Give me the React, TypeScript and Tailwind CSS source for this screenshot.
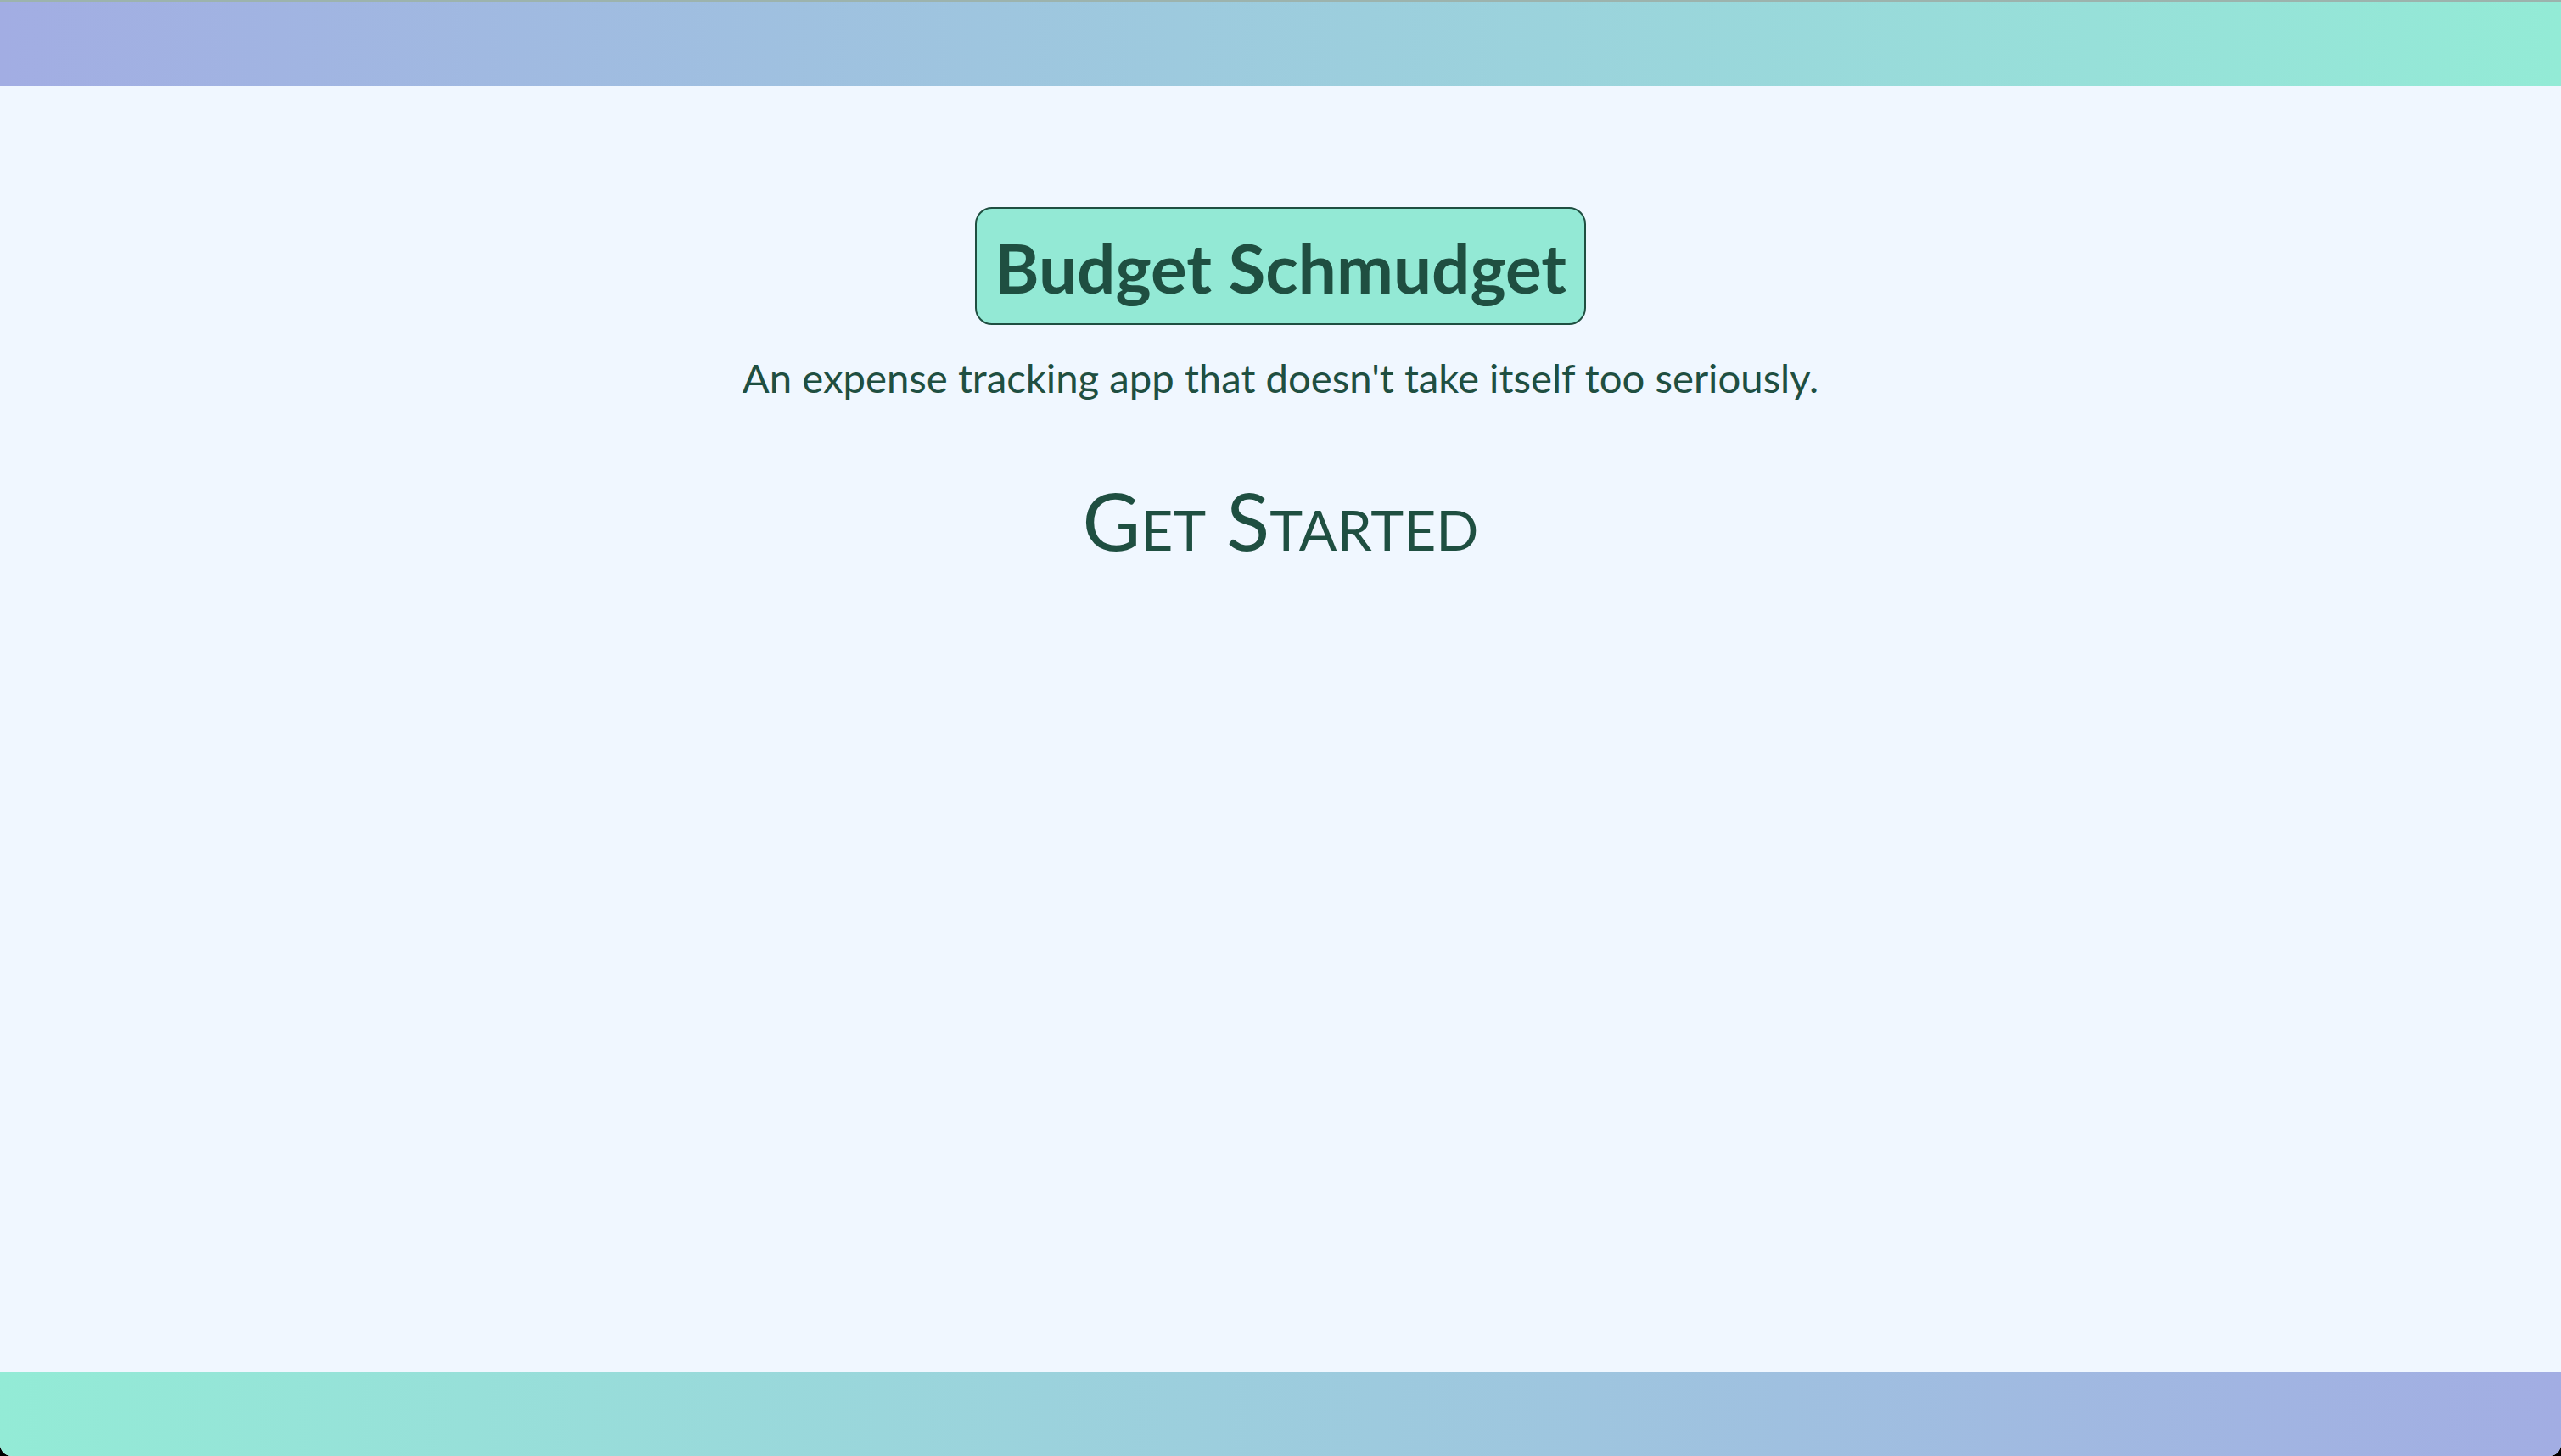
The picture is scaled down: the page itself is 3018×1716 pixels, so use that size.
import React from "react";

export default function App() {
  return (
    <div className="w-full h-[1716px] bg-black" style={{ fontFamily: "Lato, 'Open Sans', sans-serif" }}>
      <div className="flex h-full w-full flex-col overflow-hidden rounded-b-[14px] bg-[#f0f7ff]">
        <div className="h-[101px] w-full shrink-0 border-t-2 border-[#9cb3ad] bg-gradient-to-r from-[#a2ade3] to-[#93ebd6]" />
        <main className="flex flex-1 flex-col items-center text-[#1f4f41]">
          <h1 className="mt-[143px] rounded-[20px] border-2 border-[#1f4f41] bg-[#93e9d5] px-[21px] pt-[21px] pb-[18px] text-[80px] font-bold leading-[1.2]">
            Budget Schmudget
          </h1>
          <p className="mt-[34px] text-[47.3px] leading-[1.2]">
            An expense tracking app that doesn&apos;t take itself too seriously.
          </p>
          <h2 className="mt-[83px] text-[94px] leading-[1.2] [font-variant:small-caps]">
            Get Started
          </h2>
        </main>
        <div className="h-[99px] w-full shrink-0 bg-gradient-to-r from-[#93ebd6] to-[#a2ade3]" />
      </div>
    </div>
  );
}
